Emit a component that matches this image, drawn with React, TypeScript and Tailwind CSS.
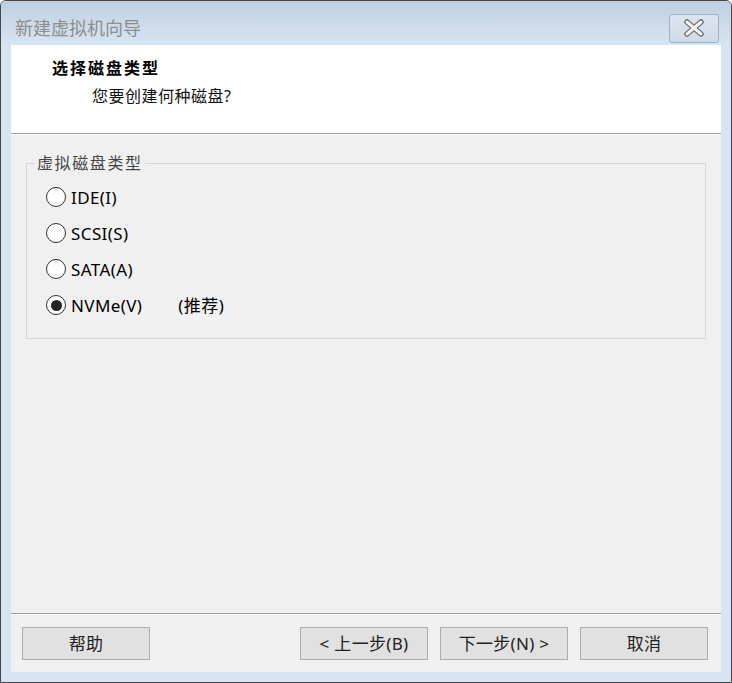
import React from "react";

const font = { fontFamily: '"Noto Sans", "Noto Sans CJK SC", sans-serif' };

function Radio({ label, checked, extra }: { label: string; checked?: boolean; extra?: string }) {
  return (
    <div className="flex items-center h-[36px]">
      <div className="w-[20px] h-[20px] rounded-full border border-[#333] bg-white flex items-center justify-center">
        {checked && <div className="w-[11px] h-[11px] rounded-full bg-[#222]" />}
      </div>
      <span className="ml-[5px] text-[17px] tracking-[0.4px] text-black leading-none">{label}</span>
      {extra && <span className="ml-[36px] text-[17px] tracking-[0.4px] text-black leading-none">{extra}</span>}
    </div>
  );
}

function Btn({ children }: { children: React.ReactNode }) {
  return (
    <button className="w-[128px] h-[33px] bg-[#e1e1e1] border border-[#adadad] text-[17px] tracking-[0.3px] text-[#222] flex items-center justify-center leading-none">
      {children}
    </button>
  );
}

export default function App() {
  return (
    <div
      className="w-[732px] h-[683px] border border-[#474747] rounded-t-[6px] bg-[#d7e4f2] flex flex-col overflow-hidden"
      style={font}
    >
      <div className="h-[44px] bg-gradient-to-b from-[#c0d0e1] to-[#d7e4f2] flex items-center justify-between pl-[14px] pr-[12px]">
        <span className="text-[18px] text-[#8d8d8d] mt-[10px]">新建虚拟机向导</span>
        <div className="w-[50px] h-[29px] mt-[10px] border border-[#9fb0c4] rounded-[3px] bg-gradient-to-b from-[#dbe5f0] to-[#cfdbe8] flex items-center justify-center">
          <svg width="22" height="18" viewBox="0 0 22 18">
            <path d="M4 3 L18 15 M18 3 L4 15" stroke="#6b6b6b" strokeWidth="5.5" strokeLinecap="round" />
            <path d="M4 3 L18 15 M18 3 L4 15" stroke="#f2f2f2" strokeWidth="3" strokeLinecap="round" />
          </svg>
        </div>
      </div>
      <div className="mx-[10px] mb-[10px] flex-1 flex flex-col bg-[#f0f0f0]">
        <div className="h-[89px] bg-white border-b border-[#a0a0a0] pl-[41px] pt-[11px]">
          <div className="text-[16px] tracking-[2px] font-bold text-black leading-[24px]">选择磁盘类型</div>
          <div className="text-[16px] tracking-[0.5px] text-[#111] leading-[24px] mt-[4px] pl-[40px]">您要创建何种磁盘?</div>
        </div>
        <div className="h-px bg-white" />
        <div className="flex-1 px-[15px] pt-[28px]">
          <div className="relative border border-[#d6d6d6] h-[176px] pl-[19px] pt-[15px]">
            <span className="absolute left-[8px] top-[-11px] bg-[#f0f0f0] px-[2px] text-[16px] tracking-[1.6px] text-[#444] leading-[20px]">
              虚拟磁盘类型
            </span>
            <Radio label="IDE(I)" />
            <Radio label="SCSI(S)" />
            <Radio label="SATA(A)" />
            <Radio label="NVMe(V)" checked extra="(推荐)" />
          </div>
        </div>
        <div className="border-t border-[#a0a0a0]" />
        <div className="border-t border-white h-[58px] flex items-start pt-[12px] pl-[11px] pr-[13px]">
          <Btn>帮助</Btn>
          <div className="flex-1" />
          <div className="flex gap-[12px]">
            <Btn>&lt; 上一步(B)</Btn>
            <Btn>下一步(N) &gt;</Btn>
            <Btn>取消</Btn>
          </div>
        </div>
      </div>
    </div>
  );
}
